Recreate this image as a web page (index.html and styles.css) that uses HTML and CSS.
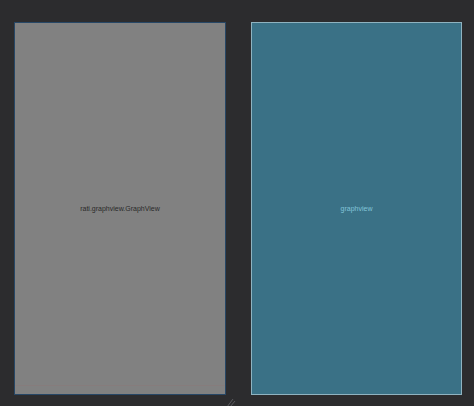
FILE: index.html
```html
<!DOCTYPE html>
<html>
<head>
<meta charset="utf-8">
<link rel="stylesheet" href="styles.css">
</head>
<body>
<div class="canvas">
  <div class="panel design">
    <span class="label">rati.graphview.GraphView</span>
    <div class="baseline"></div>
  </div>
  <div class="panel blueprint">
    <span class="label">graphview</span>
  </div>
  <div class="handle">
    <svg width="10" height="12" viewBox="0 0 10 12"><path d="M1 11 L7 3 M4 11 L9 5" stroke="#5a5a5e" stroke-width="1" fill="none"/></svg>
  </div>
</div>
</body>
</html>
```
FILE: styles.css
```css
html, body {
  margin: 0;
  padding: 0;
  background: #2c2c2e;
  width: 474px;
  height: 406px;
  overflow: hidden;
  font-family: "Liberation Sans", Arial, sans-serif;
}
.canvas {
  position: relative;
  display: flex;
  gap: 25px;
  padding: 22px 0 0 14px;
  height: 406px;
  box-sizing: border-box;
}
.panel {
  box-sizing: border-box;
  height: 373px;
  display: flex;
  align-items: center;
  justify-content: center;
  position: relative;
  padding-bottom: 1px;
}
.design {
  width: 212px;
  background: #818181;
  border: 1.5px solid #274766;
}
.blueprint {
  width: 211px;
  background: #3a7186;
  border: 1px solid #8fb3c0;
}
.design .label {
  font-size: 7px;
  color: #2a2a2a;
}
.blueprint .label {
  font-size: 7px;
  color: #82c4d8;
}
.baseline {
  position: absolute;
  left: 0;
  right: 0;
  bottom: 8px;
  height: 1px;
  background: #8a7a7a;
  opacity: 0.6;
}
.handle {
  position: absolute;
  left: 226px;
  top: 394px;
}
```
